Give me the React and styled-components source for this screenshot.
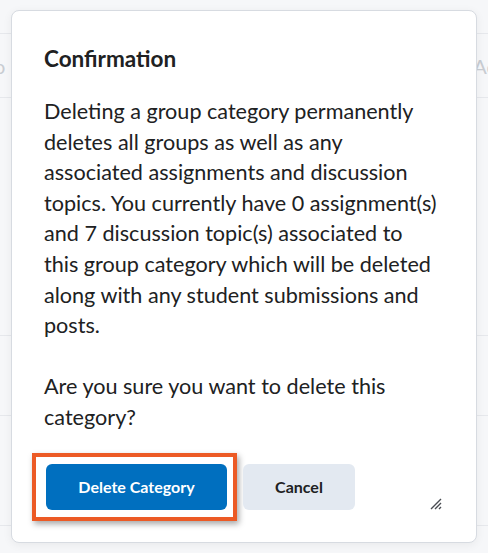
import React from 'react';
import styled, { createGlobalStyle } from 'styled-components';

const GlobalStyle = createGlobalStyle`
  html, body {
    margin: 0;
    padding: 0;
    background: #f6f7f9;
  }
  body {
    font-family: Lato, "Open Sans", sans-serif;
    color: #202122;
  }
`;

const Page = styled.div`
  position: relative;
  width: 488px;
  height: 553px;
  overflow: hidden;
  background: #f6f7f9;
`;

const BgRow = styled.div`
  height: ${p => p.h}px;
  border-bottom: 1px solid #e6e8ec;
  display: flex;
  align-items: center;
  justify-content: space-between;
  color: #c8ccd2;
  font-size: 20px;
  box-sizing: border-box;
`;

const BgText = styled.span`
  margin: ${p => p.m};
`;

const Dialog = styled.div`
  position: absolute;
  left: 11px;
  top: 10px;
  width: 466px;
  height: 533px;
  box-sizing: border-box;
  background: #ffffff;
  border: 1px solid #d7dbe1;
  border-radius: 8px;
  box-shadow: 0 2px 10px rgba(0, 0, 0, 0.06);
  padding: 33px 34px 0 32px;
  display: flex;
  flex-direction: column;
`;

const Title = styled.h2`
  margin: 0;
  font-size: 22.5px;
  font-weight: 700;
  line-height: 30px;
  color: #202122;
`;

const Body = styled.div`
  margin-top: 22px;
  font-size: 21.6px;
  line-height: 30.6px;
  color: #202122;
  p {
    margin: 0 0 30.6px 0;
  }
  p:last-child {
    margin-bottom: 0;
  }
`;

const Footer = styled.div`
  margin-top: 11px;
  display: flex;
  align-items: flex-start;
  gap: 6px;
  position: relative;
  padding-top: 9px;
`;

const Highlight = styled.div`
  margin-left: -12px;
  border: 4px solid #ec5a25;
  padding: 7px 6px 7px 10px;
  box-shadow: 2px 3px 6px rgba(0, 0, 0, 0.35);
  display: flex;
`;

const Button = styled.button`
  font-family: Lato, "Open Sans", sans-serif;
  font-size: 16px;
  font-weight: 700;
  height: 46px;
  border: none;
  border-radius: 6px;
  padding: 0;
  width: ${p => p.w}px;
  background: ${p => (p.primary ? '#006fbf' : '#e3e9f1')};
  color: ${p => (p.primary ? '#ffffff' : '#202122')};
  cursor: pointer;
`;

const CancelWrap = styled.div`
  padding-top: 11px;
`;

const Grip = styled.svg`
  position: absolute;
  right: 0;
  top: 54px;
`;

export default function App() {
  return (
    <Page>
      <GlobalStyle />
      <BgRow h={34} />
      <BgRow h={64}>
        <BgText m="0 0 0 -6px">o</BgText>
        <BgText m="0 -8px 0 0">Ac</BgText>
      </BgRow>
      <BgRow h={238} />
      <BgRow h={80} />
      <BgRow h={110} />
      <Dialog>
        <Title>Confirmation</Title>
        <Body>
          <p>
            Deleting a group category permanently deletes all groups as well as any
            associated assignments and discussion topics. You currently have 0
            assignment(s) and 7 discussion topic(s) associated to this group category
            which will be deleted along with any student submissions and posts.
          </p>
          <p>Are you sure you want to delete this category?</p>
        </Body>
        <Footer>
          <Highlight>
            <Button primary w={181}>Delete Category</Button>
          </Highlight>
          <CancelWrap>
            <Button w={112}>Cancel</Button>
          </CancelWrap>
          <Grip width="12" height="12" viewBox="0 0 12 12">
            <path d="M1 11 L11 1 M5 11 L11 5 M9 11 L11 9" stroke="#494c52" strokeWidth="1.4" fill="none" />
          </Grip>
        </Footer>
      </Dialog>
    </Page>
  );
}
